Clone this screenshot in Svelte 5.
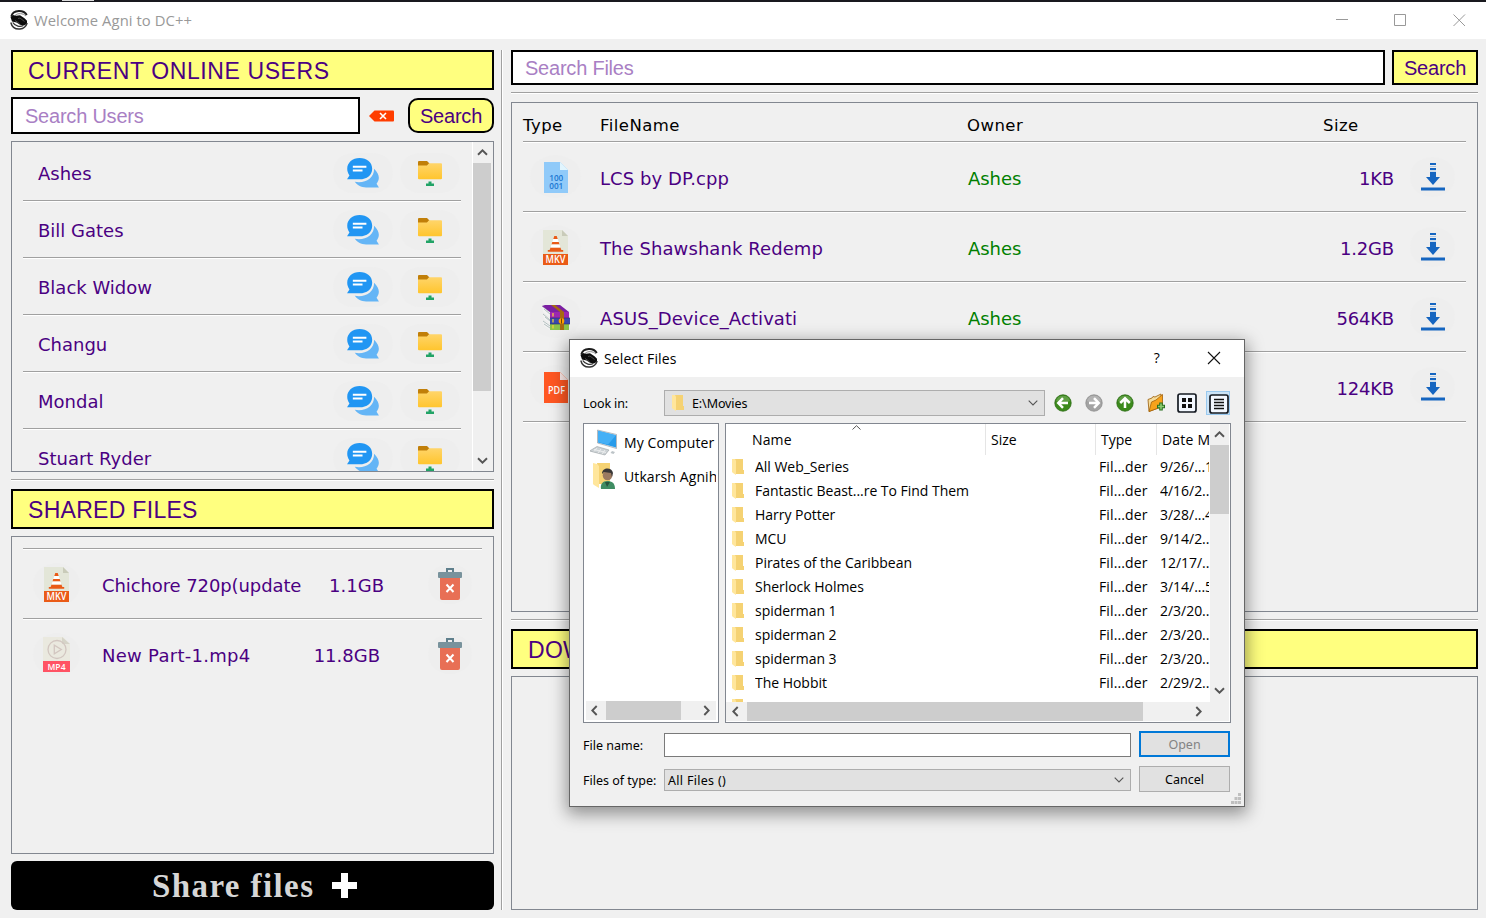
<script>
  const users = ['Ashes', 'Bill Gates', 'Black Widow', 'Changu', 'Mondal', 'Stuart Ryder'];
  const shared = [
    { kind: 'mkv', name: 'Chichore 720p(update', size: '1.1GB', inset: 44 },
    { kind: 'mp4', name: 'New Part-1.mp4', size: '11.8GB', inset: 48 },
  ];
  const files = [
    { kind: 'cpp', name: 'LCS by DP.cpp', owner: 'Ashes', size: '1KB' },
    { kind: 'mkv', name: 'The Shawshank Redemp', owner: 'Ashes', size: '1.2GB' },
    { kind: 'rar', name: 'ASUS_Device_Activati', owner: 'Ashes', size: '564KB' },
    { kind: 'pdf', name: '', owner: '', size: '124KB' },
  ];
  const folders = [
    ['All Web_Series', '9/26/...19'],
    ['Fantastic Beast...re To Find Them', '4/16/2...'],
    ['Harry Potter', '3/28/...4'],
    ['MCU', '9/14/2...'],
    ['Pirates of the Caribbean', '12/17/...'],
    ['Sherlock Holmes', '3/14/...5'],
    ['spiderman 1', '2/3/20...'],
    ['spiderman 2', '2/3/20...'],
    ['spiderman 3', '2/3/20...'],
    ['The Hobbit', '2/29/2...'],
    ['', ''],
  ];
</script>

{#snippet logo()}
  <svg class="logo" width="18" height="20" viewBox="0 0 18 20">
    <path d="M16.800 5C15 1.800 12 .9 8.800 1 5 1.200 2 3 1.300 6.500" fill="none" stroke="#1d1d1d" stroke-width="1.900" />
    <path d="M16 6C13 3.200 8 2.700 5 5.500" fill="none" stroke="#888" stroke-width="1" />
    <path d="M.5 7 3 5l3 .8L10 5.300l4.500 3 2.500 2.500v3L14 15.500l-4-.8L6.500 12.500 2 11.500z" fill="#0c0c0c" />
    <path d="M8 8.500 10 8l4.500 3.500M5 10.500l4.500 3" fill="none" stroke="#888" stroke-width=".5" />
    <path d="M.8 12.500C2 17.500 6 19.300 10 19c3.600-.3 6-2.300 7.200-6M2.800 12.500c2.500 4 7.500 4.700 10.500 3" fill="none" stroke="#333" stroke-width="1.400" />
  </svg>
{/snippet}

{#snippet fileIcon(kind)}
  {#if kind === 'mkv'}
    <svg width="25" height="35" viewBox="0 0 25 35">
      <path d="M0 0h19l6 6v19H0z" fill="#e3e6d8" /><path d="M19 0v6h6z" fill="#c9cbb9" />
      <path d="M11.300 6h2.400l1 3h-4.400zM9.300 12h6.400l.8 2.600h-8zM7.600 17.500h9.800l1 2.500h1.800v1.800H4.800V20h1.800z" fill="#ea5b17" />
      <path d="M10.300 9h4.400l1 3H9.300zM8.500 14.600h8l.9 2.900H7.600z" fill="#fff" />
      <rect y="24" width="25" height="11" fill="#ea5b17" />
      <text x="12.500" y="33" text-anchor="middle" font-size="10" font-weight="600" fill="#fff" textLength="20" lengthAdjust="spacingAndGlyphs">MKV</text>
    </svg>
  {:else if kind === 'mp4'}
    <svg width="27" height="35" viewBox="0 0 27 35">
      <path d="M0 0h20l7 7v17H0z" fill="#eae9df" /><path d="M19 0v7h8z" fill="#d6d4c8" />
      <circle cx="14" cy="12.500" r="9" fill="none" stroke="#d2c6c0" stroke-width="1.300" />
      <path d="M11.300 8.200v8.600l7-4.300z" fill="none" stroke="#d2c6c0" stroke-width="1.300" />
      <rect y="24" width="27" height="11" fill="#ff5364" />
      <text x="13.500" y="32.700" text-anchor="middle" font-size="8.500" font-weight="600" fill="#fff" textLength="18">MP4</text>
    </svg>
  {:else if kind === 'cpp'}
    <svg width="24" height="31" viewBox="0 0 24 31">
      <path d="M0 0h16l8 8v23H0z" fill="#90caf9" /><path d="M16 0v8h8z" fill="#e1f5fe" />
      <text x="12.300" y="19" text-anchor="middle" font-size="9" font-weight="600" fill="#1976d2" textLength="14" lengthAdjust="spacingAndGlyphs">100</text>
      <text x="12.300" y="27.300" text-anchor="middle" font-size="9" font-weight="600" fill="#1976d2" textLength="14" lengthAdjust="spacingAndGlyphs">001</text>
    </svg>
  {:else if kind === 'pdf'}
    <svg width="24" height="31" viewBox="0 0 24 31">
      <path d="M0 0h16l8 8v23H0z" fill="#ff5722" /><path d="M16 0v8h8z" fill="#fbe9e7" />
      <text x="12.500" y="22" text-anchor="middle" font-size="10.500" font-weight="600" fill="#fff" textLength="17" lengthAdjust="spacingAndGlyphs">PDF</text>
    </svg>
  {:else}
    <svg width="28" height="25" viewBox="0 0 28 25">
      <path d="M0 1 8 7v5L1 7zM1 9l7 5v4l-6-4zM1 16l7 4v5l-6-4z" fill="#f3f3f3" />
      <path d="m0 1 8 6M2 4l6 5M1 9l7 6M3 12l5 4M1 16l7 5M2 19l6 4" stroke="#9aa" stroke-width=".7" />
      <path d="M0 1 3 0h15l9 7H8z" fill="#7b1fa2" /><path d="M8 7h19v6H8z" fill="#9c27b0" />
      <path d="M8 13h20v6H8z" fill="#3949ab" /><path d="M8 19h19v6H8z" fill="#8bc34a" />
      <path d="M8 13h20M8 19h20" stroke="#2b2a6b" stroke-width=".6" />
      <path d="M11 8v16" stroke="#fdd835" stroke-width="1.200" stroke-dasharray="3.500 2.500" />
      <path d="M9 0h4l9 7v18h-4V7z" fill="#a66a12" />
      <circle cx="19.500" cy="16" r="2.800" fill="#ffa000" /><path d="M19.500 13.500v5" stroke="#6d4305" />
    </svg>
  {/if}
{/snippet}

{#snippet arrow(dir)}
  <svg class="arrow to-{dir}" width="11" height="7" viewBox="0 0 11 7">
    <path d="M1 5.700 5.500 1.300 10 5.700" fill="none" stroke="#555" stroke-width="1.900" />
  </svg>
{/snippet}

{#snippet folder()}
  <svg width="13" height="16" viewBox="0 0 13 16">
    <path d="M3 0h8v11h1v4H4z" fill="#f5d273" />
    <path d="M0 0h3l1 2v14l-3-2-1-1z" fill="#ffe69c" />
  </svg>
{/snippet}

{#snippet chevron()}
  <svg width="10" height="6" viewBox="0 0 10 6"><path d="m.7.7 4.300 4.300L9.300.7" fill="none" stroke="#555" stroke-width="1.100" /></svg>
{/snippet}

<div class="window">
  <div class="desktop"><i></i></div>
  <header class="titlebar">
    {@render logo()}
    <span class="apptitle">Welcome Agni to DC++</span>
    <svg class="controls" width="130" height="14" viewBox="0 0 130 14" fill="none" stroke="#999">
      <path d="M0 6.500h12M58.500 1.500h11v11h-11zM117.500 1.500l11.500 11.500M129 1.500 117.500 13" />
    </svg>
  </header>

  <main>
    <section class="sidebar">
      <h2 class="wide">CURRENT ONLINE USERS</h2>
      <div class="usersearch">
        <div class="field">Search Users</div>
        <svg width="25" height="12" viewBox="0 0 25 12"><path d="M0 6 5.500.5H24q1 0 1 1v9q0 1-1 1H5.500z" fill="#ff3d00" /><path d="m11 3 6 6m0-6-6 6" stroke="#fff" stroke-width="1.600" /></svg>
        <button class="search round">Search</button>
      </div>
      <div class="panel users">
        <div class="rows">
          {#each users as user}
            <div class="user">
              <span>{user}</span>
              <div class="oval">
                <svg width="32" height="30" viewBox="0 0 33 31">
                  <path d="M28 11c6 6 6 11 2.500 15.500L33 30.500H22c-6 0-10-1-14-6 10 2 20-3 20-13.500z" fill="#64b5f6" />
                  <path d="M13 0c7.500 0 13 4.500 13 11s-5.500 11-13 11H0l2.500-4C-3.500 9 3 0 13 0z" fill="#2196f3" />
                  <path d="M6 9h14M6 13h10" stroke="#fff" stroke-width="2" />
                </svg>
              </div>
              <div class="oval">
                <svg width="24" height="26" viewBox="0 0 24 26">
                  <defs><linearGradient id="fold" x2="0" y2="1"><stop stop-color="#ffd56a" /><stop offset="1" stop-color="#ffc52e" /></linearGradient></defs>
                  <path d="M0 1q0-1 1-1h8l2.500 2.500L9.500 5H0z" fill="#c17f09" />
                  <path d="M0 4.500h9l2-2.300h12q1 0 1 1v14q0 1-1 1H1q-1 0-1-1z" fill="url(#fold)" />
                  <path d="M10.500 20.500h3v2h2.500v2.500H8v-2.500h2.500z" fill="#21a366" />
                </svg>
              </div>
            </div>
          {/each}
        </div>
        <div class="vbar"><span>{@render arrow('up')}</span><i class="thumb"></i><span class="last">{@render arrow('down')}</span></div>
      </div>
      <hr />
      <h2>SHARED FILES</h2>
      <div class="panel shared">
        {#each shared as f}
          <div class="sharedrow">
            <div class="oval">{@render fileIcon(f.kind)}</div>
            <span class="name {f.kind}">{f.name}</span>
            <span class="size" style="margin-right: {f.inset}px">{f.size}</span>
            <div class="oval">
              <svg width="24" height="32" viewBox="0 0 24 32">
                <path d="M9 4V1h6v3" fill="none" stroke="#5f7f8c" stroke-width="2" />
                <path d="M2 9h20v21q0 2-2 2H4q-2 0-2-2z" fill="#e86f55" />
                <rect y="4" width="24" height="6" rx="1" fill="#78929c" />
                <path d="m8.500 16.500 7 7.500m0-7.500-7 7.500" stroke="#fff" stroke-width="2" />
              </svg>
            </div>
          </div>
        {/each}
      </div>
      <button class="share"><span>Share files</span><svg width="25" height="25" viewBox="0 0 25 25"><path d="M12.500 0v25M0 12.500h25" stroke="#fff" stroke-width="7" /></svg></button>
    </section>

    <i class="divider"></i>

    <section class="content">
      <div class="filesearch">
        <div class="field">Search Files</div>
        <button class="search">Search</button>
      </div>
      <hr />
      <div class="panel results">
        <div class="filerow head"><span>Type</span><span>FileName</span><span>Owner</span><span class="sizehead">Size</span></div>
        {#each files as f}
          <div class="filerow">
            <div class="oval {f.kind}">{@render fileIcon(f.kind)}</div>
            <span>{f.name}</span>
            <span class="owner">{f.owner}</span>
            <span class="size">{f.size}</span>
            <div class="oval">
              <svg width="24" height="28" viewBox="0 0 24 28">
                <path d="M9 1h6M9 6h6" stroke="#1565c0" stroke-width="2" /><path d="M9 3.500h6M9 8h6" stroke="#a9c6e6" />
                <path d="M9 9h6v5h4l-7 8-7-8h4z" fill="#1565c0" /><path d="M0 26h24" stroke="#1565c0" stroke-width="3" />
              </svg>
            </div>
          </div>
        {/each}
      </div>
      <hr />
      <h2>DOWNLOADS</h2>
      <div class="panel downloads"></div>
    </section>
  </main>

  <div class="dialog">
    <header>
      {@render logo()}
      <span>Select Files</span>
      <b>?</b>
      <svg width="14" height="14" viewBox="0 0 14 14"><path d="m1 1 12 12M13 1 1 13" stroke="#111" stroke-width="1.100" /></svg>
    </header>
    <div class="lookin">
      <label for="look">Look in:</label>
      <div class="combo" id="look">{@render folder()}<span>E:\Movies</span>{@render chevron()}</div>
      <div class="tools">
        {#each [['#3c8a1c', 0], ['#a3a3a3', 180], ['#3c8a1c', 90]] as [color, turn]}
          <svg width="18" height="18" viewBox="0 0 18 18">
            <circle cx="9" cy="9" r="8.200" fill={color} stroke={turn === 180 ? '#8d8d8d' : '#296b12'} stroke-width=".8" />
            <path d="M2 7a7.300 7.300 0 0 1 14 0q-7 3-14 0z" fill="#fff" opacity=".18" />
            <path transform="rotate({turn} 9 9)" d="M14 9H4.500M9 4.200 4.300 9 9 13.800" fill="none" stroke="#fff" stroke-width="2.500" />
          </svg>
        {/each}
        <svg width="18" height="19" viewBox="0 0 18 19">
          <path d="M1 6.500 5 5l1-1.500 2 .5L14 1v13L2 18.500z" fill="#f5dc9a" stroke="#a36a1b" stroke-width=".9" />
          <path d="M2 18.500 4.500 9 9 7l6.500-5.500v12z" fill="#f7a21b" stroke="#a35f09" stroke-width=".8" />
          <path d="M14 9.500v8M10 13.500h8" stroke="#287021" stroke-width="3.600" /><path d="M14 10.500v6M11 13.500h6" stroke="#8dcc70" stroke-width="1.600" />
        </svg>
        <svg width="20" height="20" viewBox="0 0 20 20">
          <rect x="1" y="1" width="18" height="18" rx="2" fill="#f3f8ff" stroke="#151a22" stroke-width="1.700" />
          <path d="M5 5h4v4H5zM11 5h4v4h-4zM5 11h4v4H5zM11 11h4v4h-4z" fill="#111" />
        </svg>
        <span class="active">
          <svg width="20" height="20" viewBox="0 0 20 20">
            <rect x="1" y="1" width="18" height="18" rx="2" fill="#f3f8ff" stroke="#151a22" stroke-width="1.700" />
            <path d="M5 5.500h10M5 8.500h10M5 11.500h10M5 14.500h10" stroke="#111" stroke-width="1.400" />
          </svg>
        </span>
      </div>
    </div>
    <div class="browse">
      <div class="places">
        <div class="place">
          <svg width="29" height="27" viewBox="0 0 29 27">
            <path d="m9 1 19 4.500v14L9 14z" fill="#e9edf0" stroke="#8a9298" stroke-width=".6" transform="translate(-1.500)" /><path d="m8 1.700 18 4.500V18.500L8 13.500z" fill="#279bea" /><path d="m8 1.700 18 4.500-8 9.400-10-2.600z" fill="#45b0f6" />
            <path d="m8 17.500 12 3.500-4 5L.5 22z" fill="#ccd2d5" stroke="#9aa1a5" stroke-width=".6" transform="translate(-1)" /><path d="m5 20.500 12 3M8 19l-3 3.500M12 20l-3 4M16 21l-3 4" stroke="#f8f8f8" stroke-width=".7" transform="translate(-1)" /><path d="m22 22 3 1-1.500 2-3-1z" fill="#bcc3c7" />
          </svg>
          <span>My Computer</span>
        </div>
        <div class="place">
          <svg width="29" height="28" viewBox="0 0 29 28">
            <path d="M7 1h13v21H9z" fill="#f5d273" /><path d="m3 1 4 1 2 2v22l-5-3-1-1z" fill="#ffe69c" />
            <path d="M11 27c-1-5 2-8 6-8 5 0 8 2 8 8z" fill="#3f8d63" /><circle cx="17.500" cy="13.500" r="4.800" fill="#9b7a61" /><path d="M12 12c0-7 10-7 11-1l-1 4-1-4-7-1z" fill="#393737" /><path d="m15 20 2 5 3-5z" fill="#28543f" />
          </svg>
          <span>Utkarsh Agnihotri</span>
        </div>
        <div class="hbar">{@render arrow('left')}<i class="thumb"></i>{@render arrow('right')}</div>
      </div>
      <div class="listing">
        <div class="table">
          <div class="thead"><span>Name<svg class="sort" width="9" height="5" viewBox="0 0 9 5"><path d="M.5 4.500 4.500.7l4 3.800" fill="none" stroke="#555" /></svg></span><span>Size</span><span>Type</span><span>Date Modified</span></div>
          {#each folders as [name, date]}
            <div class="trow">{@render folder()}<span>{name}</span><span>{name ? 'Fil...der' : ''}</span><span>{date}</span></div>
          {/each}
        </div>
        <div class="vbar"><span>{@render arrow('up')}</span><i class="thumb"></i><span class="last">{@render arrow('down')}</span></div>
        <div class="hbar">{@render arrow('left')}<i class="thumb"></i>{@render arrow('right')}</div>
      </div>
    </div>
    <div class="form">
      <span>File name:</span>
      <div class="entry"></div>
      <button class="open">Open</button>
      <span>Files of type:</span>
      <div class="combo types"><span>All Files ()</span>{@render chevron()}</div>
      <button>Cancel</button>
    </div>
    <svg class="grip" width="10" height="11" viewBox="0 0 10 11"><path d="M7 0h3v3H7zM3.500 4h3v3h-3zM7 4h3v3H7zM0 8h3v3H0zM3.500 8h3v3h-3zM7 8h3v3H7z" fill="#bfbfbf" /></svg>
  </div>
</div>

<style>
  :global(body) { margin: 0; overflow: hidden; }
  * { box-sizing: border-box; }
  svg { display: block; flex: none; }
  svg text { font-family: 'Open Sans', sans-serif; letter-spacing: 0; }
  button { padding: 0; }
  .window { position: relative; width: 1486px; height: 918px; background: #f0f0f0; font-family: 'DejaVu Sans', sans-serif; font-size: 18px; color: #4b0082; white-space: nowrap; overflow: hidden; }
  .desktop { height: 2px; background: #19191f; padding-left: 62px; }
  .desktop i { display: block; width: 32px; height: 1px; background: #ddd; }
  .titlebar { height: 37px; background: #fff; display: flex; align-items: center; padding: 0 0 2px 10px; }
  .apptitle { font: 14.800px 'Open Sans', sans-serif; color: #999; margin-left: 6px; letter-spacing: .07px; padding-top: 1px; }
  .controls { margin: 0 20px 0 auto; }
  main { display: flex; padding: 11px 8px 8px 11px; height: 879px; }
  .sidebar { width: 483px; display: flex; flex-direction: column; }
  .divider { width: 2px; height: 860px; margin: 0 8px 0 7px; border-left: 1px solid #a0a0a0; background: #fff; }
  .content { width: 967px; display: flex; flex-direction: column; }
  h2 { margin: 0; height: 40px; flex: none; border: 2px solid #000; background: #ffff7f; padding-left: 15px; font: 23px/38px 'Liberation Sans', sans-serif; letter-spacing: .3px; }
  .wide { letter-spacing: .6px; }
  hr { width: 100%; height: 2px; margin: 7px 0 8px; border: 0; border-top: 1px solid #a0a0a0; background: #fff; flex: none; }
  .panel { border: 1px solid #828790; flex: none; }
  .field { background: #fff; border: 2px solid #000; color: #a97fc4; font: 20px/35px 'Liberation Sans', sans-serif; padding-left: 12px; letter-spacing: -.22px; }
  .search { width: 86px; height: 35px; border: 2px solid #000; background: #ffff7f; color: #4b0082; font: 20px 'Liberation Sans', sans-serif; letter-spacing: -.2px; padding-top: 1px; }
  .round { border-radius: 10px; }
  .usersearch { display: flex; align-items: center; justify-content: space-between; height: 37px; margin: 7px 0; }
  .usersearch .field { width: 349px; height: 37px; }
  .usersearch svg { margin: 0 5px 0 0; }
  .usersearch .round { margin-top: -1px; padding-top: 2px; }
  .users { height: 331px; display: flex; overflow: hidden; }
  .rows { width: 449px; margin-right: 11px; padding: 3px 0 0 11px; }
  .user { height: 57px; border-bottom: 1px solid #fff; display: flex; align-items: center; padding-left: 15px; box-shadow: inset 0 -1px #a0a0a0; }
  .user > span { flex: 1; letter-spacing: 0; }
  .oval { background: #eee; border-radius: 50%; display: grid; place-items: center; flex: none; }
  .user .oval { width: 60px; height: 40px; margin-left: 7px; border-radius: 20px; }
  .user .oval:last-child { margin-right: 1px; padding: 2px 0 0; }
  .vbar { display: flex; flex-direction: column; width: 20px; background: #f0f0f0; border-left: 1px solid #fff; }
  .vbar span { height: 21px; display: grid; place-items: center; flex: none; }
  .vbar .last { margin-top: auto; }
  .thumb { background: #cdcdcd; flex: none; }
  .users .thumb { height: 228px; margin-right: 1px; }
  .to-down { transform: rotate(180deg); }
  .to-left { transform: rotate(-90deg); }
  .to-right { transform: rotate(90deg); }
  .shared { height: 318px; margin: 7px 0; padding: 11px 11px 0; }
  .sharedrow { height: 70px; display: flex; align-items: center; border-top: 1px solid #a0a0a0; box-shadow: inset 0 1px #fff; padding: 1px 10px 0; }
  .sharedrow .oval { width: 47px; height: 43px; }
  .sharedrow .oval:last-child { width: 44px; height: 40px; }
  .name { margin-left: 22px; flex: 1; padding-top: 2px; }
  .name.mkv { letter-spacing: -.1px; }
  .name.mp4 { letter-spacing: .28px; }
  .size { padding-top: 2px; }
  .share { height: 49px; border: 0; border-radius: 6px; background: #000; color: #d6d6d6; display: flex; align-items: center; padding-left: 141px; font: bold 33px 'Liberation Serif', serif; letter-spacing: 1.400px; }
  .share span { width: 180px; text-align: left; padding-top: 2px; }
  .filesearch { display: flex; justify-content: space-between; }
  .filesearch .field { width: 874px; height: 35px; line-height: 33px; }
  .results { height: 510px; padding: 0 11px; }
  .filerow { display: grid; grid-template-columns: 77px 368px 250px 176px 72px; align-items: center; height: 70px; border-bottom: 1px solid #fff; box-shadow: inset 0 -1px #a0a0a0; padding-bottom: 2px; }
  .filerow span { padding-top: 3px; letter-spacing: .08px; }
  .filerow .oval { width: 51px; height: 43px; margin-left: 7px; }
  .filerow .mkv, .filerow .cpp, .filerow .rar, .filerow .pdf { padding-top: 2px; }
  .filerow .oval:last-child { width: 45px; height: 40px; margin-left: 16px; }
  .filerow .size { text-align: right; letter-spacing: -.2px; }
  .filerow .owner { color: #008000; letter-spacing: -.05px; }
  .head { height: 40px; color: #000; font-size: 16.500px; grid-template-columns: 77px 367px 356px 1fr; }
  .head span { padding-top: 8px; letter-spacing: .45px; }
  .downloads { height: 234px; margin-top: 7px; }

  .dialog { position: absolute; left: 569px; top: 339px; width: 676px; height: 468px; border: 1px solid #666; background: #f0f0f0; box-shadow: 0 5px 16px 2px rgba(0, 0, 0, .4); color: #000; font: 14px 'Open Sans', sans-serif; letter-spacing: -.03px; }
  .dialog header { display: flex; align-items: center; height: 37px; padding: 0 23px 2px 10px; background: #fff; gap: 6px; letter-spacing: .12px; }
  .dialog header span { padding-top: 1px; }
  .dialog header b { margin: 0 41px 0 auto; font-weight: 400; }
  .lookin { display: flex; align-items: center; height: 27px; margin: 12px 13px 0; font: 12.500px 'Noto Sans', sans-serif; letter-spacing: -.1px; }
  .lookin label { width: 81px; padding-top: 1px; flex: none; }
  .combo { display: flex; align-items: center; border: 1px solid #adadad; background: #e1e1e1; flex: none; }
  .combo > svg:last-child { margin: 0 6px 0 auto; }
  #look { width: 381px; height: 26px; padding-left: 7px; gap: 7px; }
  #look span { padding-top: 1px; }
  .tools { display: flex; align-items: center; margin-left: 9px; gap: 13px; }
  .tools svg:nth-child(4) { margin-right: -1px; }
  .active { margin: 0 -1px 0 -4px; width: 24px; height: 24px; background: #cce4f7; border: 1px solid #99c9ef; padding: 2px 1px; flex: none; }
  .active svg { margin-left: 1px; }
  .browse { display: flex; gap: 6px; margin: 7px 13px 0; }
  .places, .listing { border: 1px solid #828790; background: #fff; height: 300px; }
  .places { width: 136px; display: flex; flex-direction: column; padding: 1px 2px 2px; }
  .place { display: flex; align-items: center; height: 34px; padding-left: 4px; gap: 5px; overflow: hidden; letter-spacing: .1px; }
  .hbar { display: flex; align-items: center; background: #f0f0f0; height: 19px; }
  .places .hbar { margin-top: auto; padding: 0 4px 0 3px; }
  .places .thumb { width: 75px; height: 19px; margin: 0 auto 0 6px; }
  .listing { width: 506px; display: grid; grid-template: 278px 20px / 484px 20px; }
  .table { overflow: hidden; }
  .thead { display: grid; grid-template-columns: 259px 110px 61px 54px; height: 31px; line-height: 31px; overflow: hidden; }
  .thead span { border-left: 1px solid #e5e5e5; padding-left: 5px; overflow: hidden; }
  .thead span:first-child { border: 0; padding-left: 26px; display: flex; letter-spacing: .15px; }
  .thead span:last-child { letter-spacing: .2px; }
  .sort { margin: 1px 0 0 60px; }
  .trow { display: grid; grid-template-columns: 23px 344px 61px 49px; height: 24px; align-items: center; padding-left: 6px; margin-top: -1px; margin-bottom: 1px; }
  .trow svg { margin-top: 1px; }
  .trow span { overflow: hidden; }
  .trow span:nth-child(3) { letter-spacing: .12px; }
  .listing .vbar { border: 0; width: 19px; padding-bottom: 1px; }
  .listing .vbar .thumb { height: 69px; }
  .listing > .hbar { padding-left: 4px; grid-column: 1 / 3; width: 503px; }
  .listing > .hbar .thumb { width: 396px; height: 19px; margin: 0 50px 0 6px; }
  .form { display: grid; grid-template-columns: 81px 467px 91px; margin: 8px 13px 0; row-gap: 9px; align-items: center; font: 12.500px 'Noto Sans', sans-serif; letter-spacing: 0; }
  .form > span { padding-top: 2px; }
  .entry { height: 24px; margin-top: 1px; background: #fff; border: 1px solid #7a7a7a; }
  .types { height: 22px; margin-top: 1px; padding-left: 3px; letter-spacing: .3px; }
  .types span { padding-top: 1px; }
  .form button { margin-left: 8px; width: 91px; height: 26px; border: 1px solid #adadad; background: #e1e1e1; font: inherit; letter-spacing: inherit; color: #000; }
  .form .open { border: 2px solid #0078d7; color: #838383; }
  .grip { position: absolute; right: 3px; bottom: 2px; }
</style>
